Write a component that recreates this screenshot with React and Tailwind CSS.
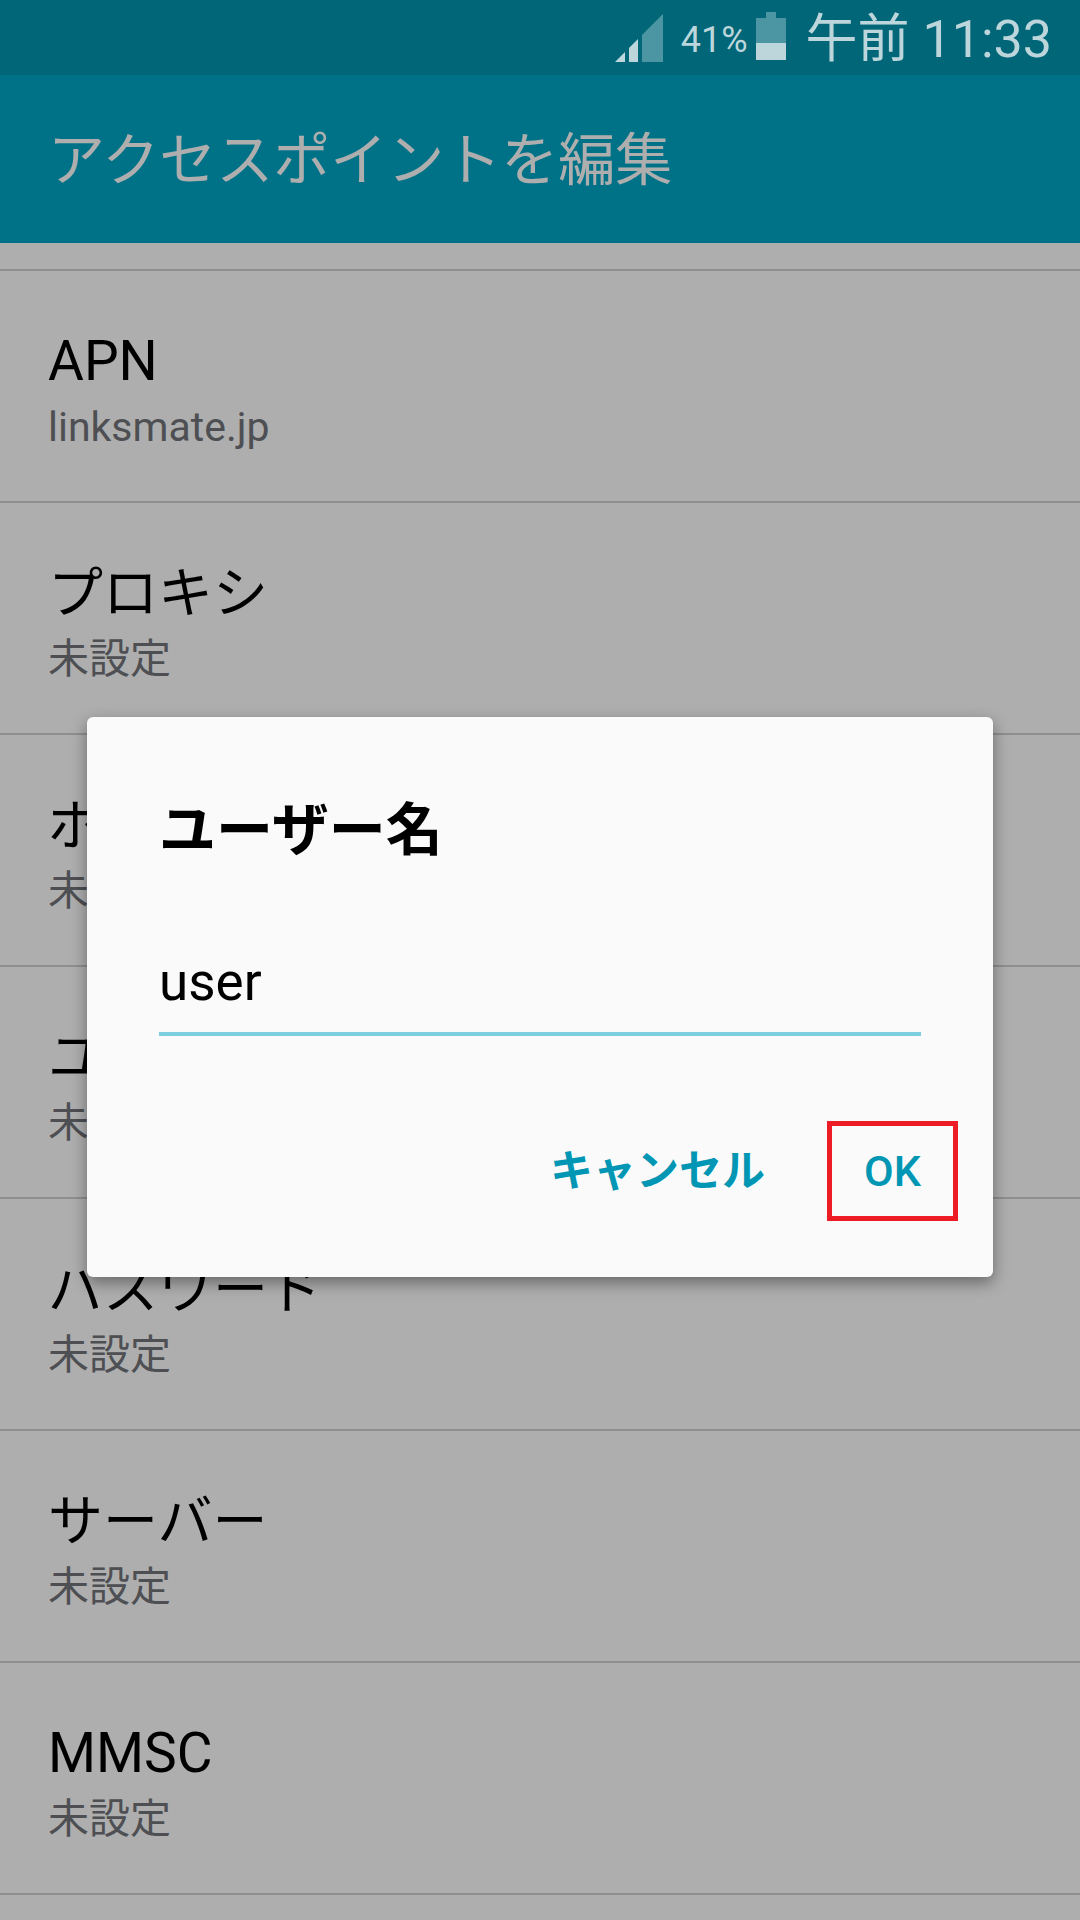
import React, { useState } from "react";

const settings = [
  { name: "APN", value: "linksmate.jp" },
  { name: "プロキシ", value: "未設定" },
  { name: "ポート", value: "未設定" },
  { name: "ユーザー名", value: "未設定" },
  { name: "パスワード", value: "未設定" },
  { name: "サーバー", value: "未設定" },
  { name: "MMSC", value: "未設定" },
];

function SignalIcon() {
  return (
    <svg className="h-12 w-12" viewBox="0 0 48 48" aria-hidden="true">
      <path d="M0 48 L10 38 V48 Z" fill="#bcd6dc" />
      <path d="M14 48 V34 L23 25 V48 Z" fill="#bcd6dc" />
      <path d="M27 48 V21 L48 0 V48 Z" fill="#4c95a3" />
    </svg>
  );
}

function BatteryIcon() {
  return (
    <svg className="block h-12 w-[30px]" viewBox="0 0 30 48" aria-hidden="true">
      <path d="M10 0 H20 V6 H30 V31 H0 V6 H10 Z" fill="#4c95a3" />
      <path d="M0 31 H30 V48 H0 Z" fill="#bcd6dc" />
    </svg>
  );
}

function StatusBar() {
  return (
    <div className="flex h-[75px] items-center justify-end bg-[#006678] pr-7 text-[#bcd6dc]">
      <SignalIcon />
      <span className="ml-[18px] pt-1 text-[36px] leading-[48px]">41%</span>
      <span className="ml-2 pb-1">
        <BatteryIcon />
      </span>
      <span className="ml-5 pt-1 text-[52px] leading-[64px]">午前 11:33</span>
    </div>
  );
}

export default function App() {
  const [open, setOpen] = useState(true);
  const [user, setUser] = useState("user");

  return (
    <div className="flex min-h-screen flex-col bg-[#aeaeae] font-['Roboto','Noto_Sans_CJK_JP',sans-serif] text-black" lang="ja">
      <StatusBar />

      <div className="relative flex-1">
        <header className="flex h-[168px] items-center bg-[#007288] px-12 pt-1">
          <h1 className="text-[57px] leading-[72px] text-[#aeaeae]">アクセスポイントを編集</h1>
        </header>

        <ul>
          <li className="h-7 border-b-2 border-[#8f8f8f]" />
          {settings.map((s) => (
            <li key={s.name} className="border-b-2 border-[#8f8f8f]">
              <button
                type="button"
                onClick={() => setOpen(true)}
                className="flex h-[230px] w-full flex-col justify-center px-12 pt-1.5 text-left"
              >
                <span className="text-[55px] leading-[76px]">{s.name}</span>
                <span className="text-[41px] leading-[56px] text-[#4d4f53]">{s.value}</span>
              </button>
            </li>
          ))}
        </ul>

        {open && (
          <div className="absolute inset-0 flex items-center justify-center px-[87px] pb-0.5">
            <form
              role="dialog"
              aria-labelledby="dialog-title"
              onSubmit={(e) => {
                e.preventDefault();
                setOpen(false);
              }}
              className="w-full rounded-md bg-[#fafafa] pt-[76px] pb-14 shadow-[0_6px_16px_rgba(0,0,0,0.4)]"
            >
              <div className="px-[72px]">
                <label id="dialog-title" htmlFor="user-name" className="block text-[57px] leading-[76px] font-bold">
                  ユーザー名
                </label>
                <input
                  id="user-name"
                  type="text"
                  value={user}
                  onChange={(e) => setUser(e.target.value)}
                  className="mt-[71px] block h-24 w-full border-b-4 border-[#7dcfdf] bg-transparent pb-2 text-[53px] outline-none"
                />
              </div>
              <div className="mt-[85px] flex items-center justify-end gap-[62px] pr-[35px] text-[43px] leading-[60px] text-[#0096b4]">
                <button type="button" onClick={() => setOpen(false)} className="font-bold">
                  キャンセル
                </button>
                <button type="submit" className="h-[100px] w-[131px] border-5 border-[#ed1c24] font-medium">
                  OK
                </button>
              </div>
            </form>
          </div>
        )}
      </div>
    </div>
  );
}
